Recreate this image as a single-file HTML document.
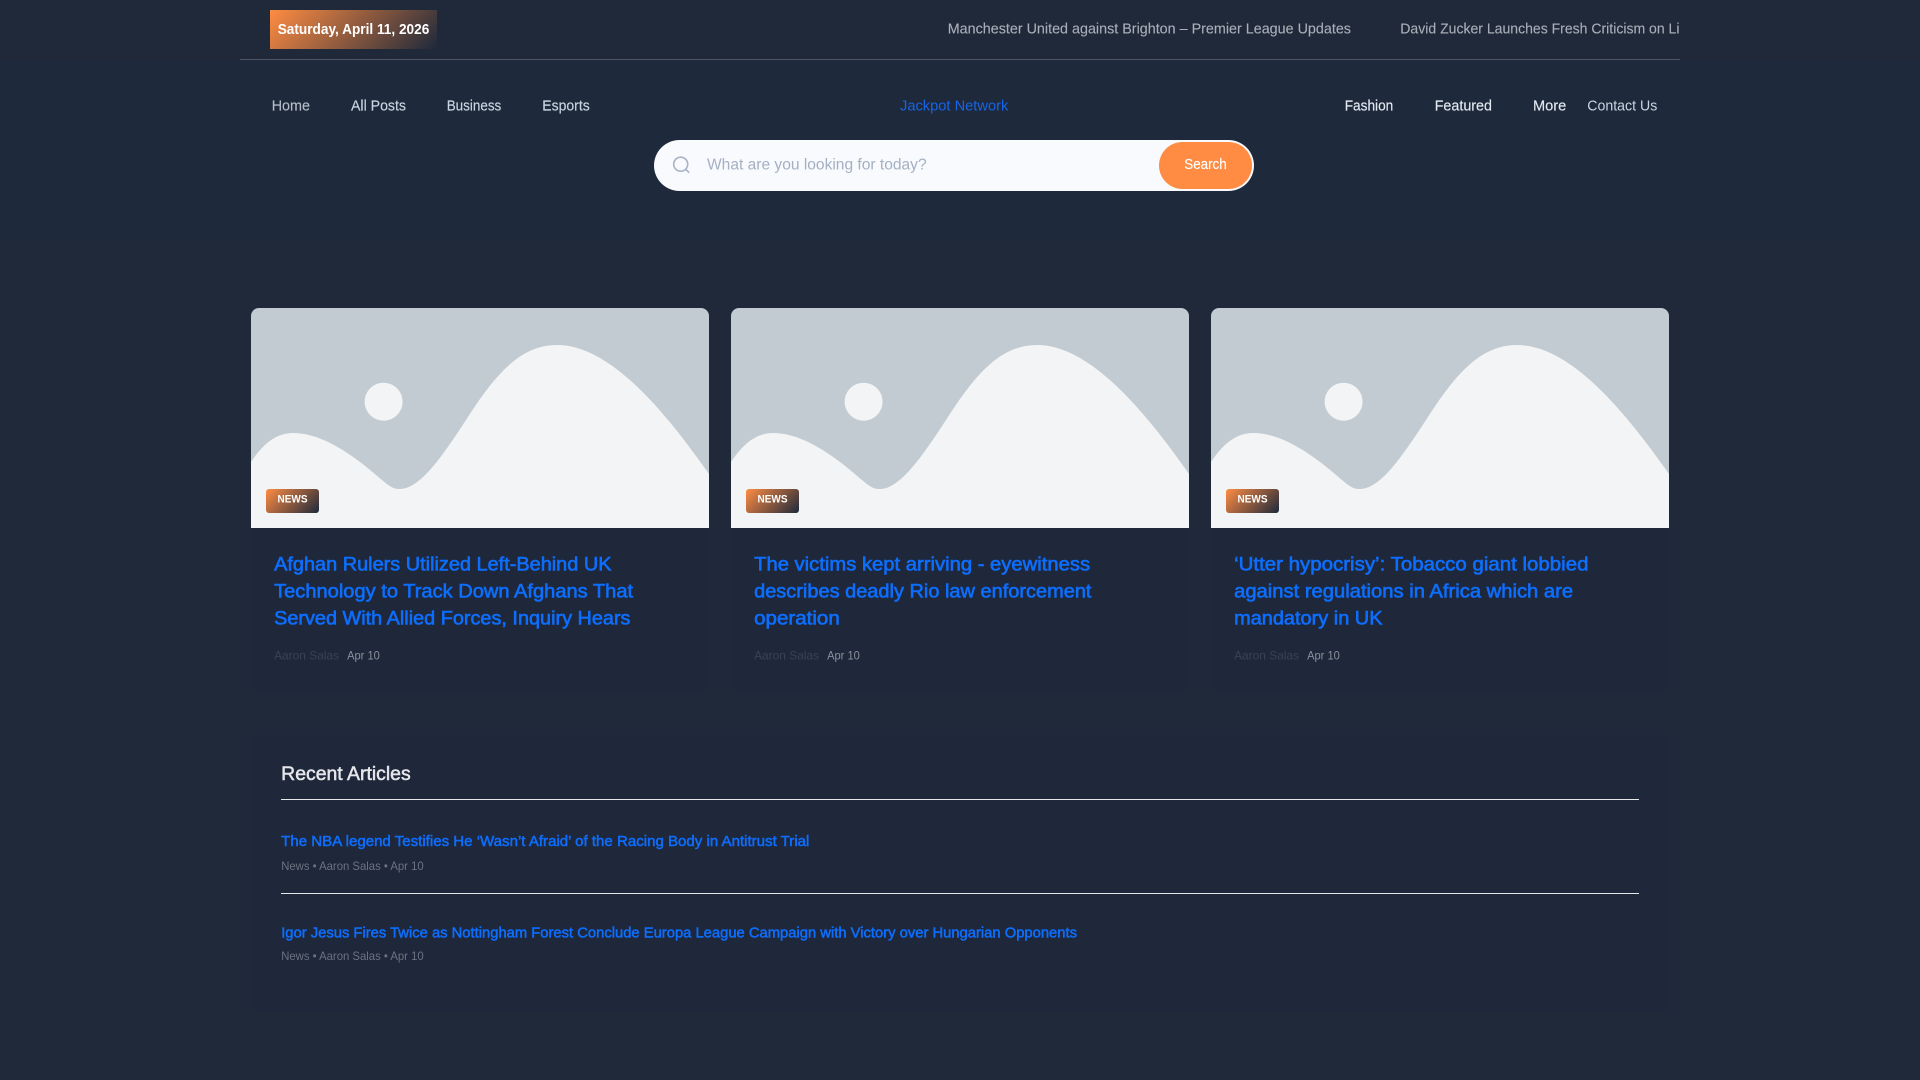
<!DOCTYPE html>
<html lang="en">
<head>
<meta charset="utf-8">
<title>Jackpot Network</title>
<style>
html,body{margin:0;padding:0;width:1920px;height:1080px;overflow:hidden;background:#202939}
body{position:relative;font-family:"Liberation Sans",sans-serif}
div{position:absolute;box-sizing:border-box}
.navbg{left:0;top:60px;width:1920px;height:180px;background:#1e293b}
.hr{left:240px;top:59px;width:1440px;height:1px;background:#4b5563}
.date{left:270px;top:10px;width:167px;height:39px;background:linear-gradient(135deg,#ff8c42 0%,#1e293b 100%)}
.searchbox{left:654px;top:140px;width:600px;height:51px;border-radius:26px;background:#f8fafd}
.btn{left:1159px;top:142px;width:93px;height:47px;border-radius:24px;background:#ff8c42}
.card{top:308px;width:458px;height:382px;border-radius:8px;background:#1f273a;overflow:hidden}
.card svg{display:block}
.badge{left:15px;top:181px;width:53px;height:24px;border-radius:3px;background:linear-gradient(135deg,#ff8c42 0%,#1e293b 100%)}
.recent{left:251px;top:735px;width:1418px;height:277px;border-radius:8px;background:#1f273a}
.rule{left:281px;width:1358px;height:1px;background:#e5e7eb}
#t{position:absolute;left:0;top:0}
#t text{font-family:"Liberation Sans",sans-serif;white-space:pre}
.nav{font-size:15px;stroke-width:.15px}
.tick{font-size:15px;fill:#a9afb8;stroke:#a9afb8;stroke-width:.12px}
.h{font-size:19px;fill:#0d6efd;stroke:#0d6efd;stroke-width:.6px}
.s{font-size:15px;fill:#0d6efd;stroke:#0d6efd;stroke-width:.5px}
.m{font-size:12px}
</style>
</head>
<body>
<div class="navbg"></div>
<div class="date"></div>
<div class="hr"></div>
<div class="searchbox"></div>
<div class="btn"></div>

<div class="card" style="left:251px">
<svg width="458" height="220" viewBox="0 0 458 220"><rect width="458" height="220" fill="#c2cbd2"/><circle cx="132.6" cy="93.7" r="19" fill="#f2f4f6"/><path d="M0 154C10 139 23 125 42 125C75 125 109 153 131 172C139 179 143 181 148.5 181C169 181 190 150 215 112C245 65 270 37 306 37C360 37 415 105 458 166V220H0Z" fill="#f2f4f6"/></svg>
<div class="badge"></div>
</div>
<div class="card" style="left:731px">
<svg width="458" height="220" viewBox="0 0 458 220"><rect width="458" height="220" fill="#c2cbd2"/><circle cx="132.6" cy="93.7" r="19" fill="#f2f4f6"/><path d="M0 154C10 139 23 125 42 125C75 125 109 153 131 172C139 179 143 181 148.5 181C169 181 190 150 215 112C245 65 270 37 306 37C360 37 415 105 458 166V220H0Z" fill="#f2f4f6"/></svg>
<div class="badge"></div>
</div>
<div class="card" style="left:1211px">
<svg width="458" height="220" viewBox="0 0 458 220"><rect width="458" height="220" fill="#c2cbd2"/><circle cx="132.6" cy="93.7" r="19" fill="#f2f4f6"/><path d="M0 154C10 139 23 125 42 125C75 125 109 153 131 172C139 179 143 181 148.5 181C169 181 190 150 215 112C245 65 270 37 306 37C360 37 415 105 458 166V220H0Z" fill="#f2f4f6"/></svg>
<div class="badge"></div>
</div>

<div class="recent"></div>
<div class="rule" style="top:799px"></div>
<div class="rule" style="top:893px"></div>

<svg id="t" width="1920" height="1080" viewBox="0 0 1920 1080">
<defs><clipPath id="tc"><rect x="900" y="0" width="780" height="59"/></clipPath></defs>

<text x="277.7" y="34" font-size="15" font-weight="700" fill="#ffffff" textLength="151.6" lengthAdjust="spacingAndGlyphs">Saturday, April 11, 2026</text>
<g clip-path="url(#tc)">
<text class="tick" x="947.7" y="33.3" textLength="403.3" lengthAdjust="spacingAndGlyphs">Manchester United against Brighton – Premier League Updates</text>
<text class="tick" x="1400.3" y="33.3" textLength="287" lengthAdjust="spacingAndGlyphs">David Zucker Launches Fresh Criticism on Lia</text>
</g>

<text class="nav" x="271.7" y="110.3" fill="#b4bcc8" stroke="#b4bcc8" textLength="38.3" lengthAdjust="spacingAndGlyphs">Home</text>
<text class="nav" x="351" y="110.3" fill="#cbd5e1" stroke="#cbd5e1" textLength="55" lengthAdjust="spacingAndGlyphs">All Posts</text>
<text class="nav" x="446.7" y="110.3" fill="#cbd5e1" stroke="#cbd5e1" textLength="54.6" lengthAdjust="spacingAndGlyphs">Business</text>
<text class="nav" x="542.3" y="110.3" fill="#cbd5e1" stroke="#cbd5e1" textLength="47.4" lengthAdjust="spacingAndGlyphs">Esports</text>
<text class="nav" x="900" y="110.3" fill="#1565e6" textLength="108.3" lengthAdjust="spacingAndGlyphs">Jackpot Network</text>
<text class="nav" x="1344.7" y="110.3" fill="#e2e8f0" stroke="#e2e8f0" textLength="48.6" lengthAdjust="spacingAndGlyphs">Fashion</text>
<text class="nav" x="1434.7" y="110.3" fill="#e2e8f0" stroke="#e2e8f0" textLength="57.3" lengthAdjust="spacingAndGlyphs">Featured</text>
<text class="nav" x="1533" y="110.3" fill="#e2e8f0" stroke="#e2e8f0" textLength="33.3" lengthAdjust="spacingAndGlyphs">More</text>
<text class="nav" x="1587.3" y="110.3" fill="#cbd5e1" textLength="70" lengthAdjust="spacingAndGlyphs">Contact Us</text>

<g fill="none" stroke="#a8b3c7" stroke-width="1.6" stroke-linecap="round"><circle cx="680.7" cy="164.2" r="7"/><path d="M685.8 169.3L688.7 172.2"/></g>
<text x="707" y="169.3" font-size="15.5" fill="#a5b0c4" textLength="219.6" lengthAdjust="spacingAndGlyphs">What are you looking for today?</text>
<text x="1184.3" y="169.2" font-size="15" fill="#ffffff" stroke="#ffffff" stroke-width=".15" textLength="42.4" lengthAdjust="spacingAndGlyphs">Search</text>

<text x="277.5" y="502.7" font-size="11" font-weight="700" fill="#ffffff" textLength="30" lengthAdjust="spacingAndGlyphs">NEWS</text>
<text x="757.5" y="502.7" font-size="11" font-weight="700" fill="#ffffff" textLength="30" lengthAdjust="spacingAndGlyphs">NEWS</text>
<text x="1237.5" y="502.7" font-size="11" font-weight="700" fill="#ffffff" textLength="30" lengthAdjust="spacingAndGlyphs">NEWS</text>

<text class="h" x="274.1" y="570.3" textLength="337.4" lengthAdjust="spacingAndGlyphs">Afghan Rulers Utilized Left-Behind UK</text>
<text class="h" x="274.1" y="597.3" textLength="359" lengthAdjust="spacingAndGlyphs">Technology to Track Down Afghans That</text>
<text class="h" x="274.1" y="624.3" textLength="356.4" lengthAdjust="spacingAndGlyphs">Served With Allied Forces, Inquiry Hears</text>
<text class="m" x="274.1" y="659.3" fill="#3a4352" textLength="65" lengthAdjust="spacingAndGlyphs">Aaron Salas</text>
<text class="m" x="347.1" y="659.3" fill="#8a919c" textLength="32.7" lengthAdjust="spacingAndGlyphs">Apr 10</text>

<text class="h" x="754.1" y="570.3" textLength="336" lengthAdjust="spacingAndGlyphs">The victims kept arriving - eyewitness</text>
<text class="h" x="754.1" y="597.3" textLength="337.4" lengthAdjust="spacingAndGlyphs">describes deadly Rio law enforcement</text>
<text class="h" x="754.1" y="624.3" textLength="85.7" lengthAdjust="spacingAndGlyphs">operation</text>
<text class="m" x="754.1" y="659.3" fill="#3a4352" textLength="65" lengthAdjust="spacingAndGlyphs">Aaron Salas</text>
<text class="m" x="827.1" y="659.3" fill="#8a919c" textLength="32.7" lengthAdjust="spacingAndGlyphs">Apr 10</text>

<text class="h" x="1234.1" y="570.3" textLength="354.4" lengthAdjust="spacingAndGlyphs">‘Utter hypocrisy’: Tobacco giant lobbied</text>
<text class="h" x="1234.1" y="597.3" textLength="339" lengthAdjust="spacingAndGlyphs">against regulations in Africa which are</text>
<text class="h" x="1234.1" y="624.3" textLength="148.4" lengthAdjust="spacingAndGlyphs">mandatory in UK</text>
<text class="m" x="1234.1" y="659.3" fill="#3a4352" textLength="65" lengthAdjust="spacingAndGlyphs">Aaron Salas</text>
<text class="m" x="1307.1" y="659.3" fill="#8a919c" textLength="32.7" lengthAdjust="spacingAndGlyphs">Apr 10</text>

<text x="281.2" y="780" font-size="19" fill="#e5e7eb" stroke="#e5e7eb" stroke-width=".5" textLength="129.5" lengthAdjust="spacingAndGlyphs">Recent Articles</text>
<text class="s" x="281.2" y="846.2" textLength="528.2" lengthAdjust="spacingAndGlyphs">The NBA legend Testifies He ‘Wasn’t Afraid’ of the Racing Body in Antitrust Trial</text>
<text class="m" x="281.2" y="870" fill="#6b7280" textLength="142.5" lengthAdjust="spacingAndGlyphs">News • Aaron Salas • Apr 10</text>
<text class="s" x="281.2" y="937.3" textLength="795.8" lengthAdjust="spacingAndGlyphs">Igor Jesus Fires Twice as Nottingham Forest Conclude Europa League Campaign with Victory over Hungarian Opponents</text>
<text class="m" x="281.2" y="960" fill="#6b7280" textLength="142.5" lengthAdjust="spacingAndGlyphs">News • Aaron Salas • Apr 10</text>
</svg>
</body>
</html>
